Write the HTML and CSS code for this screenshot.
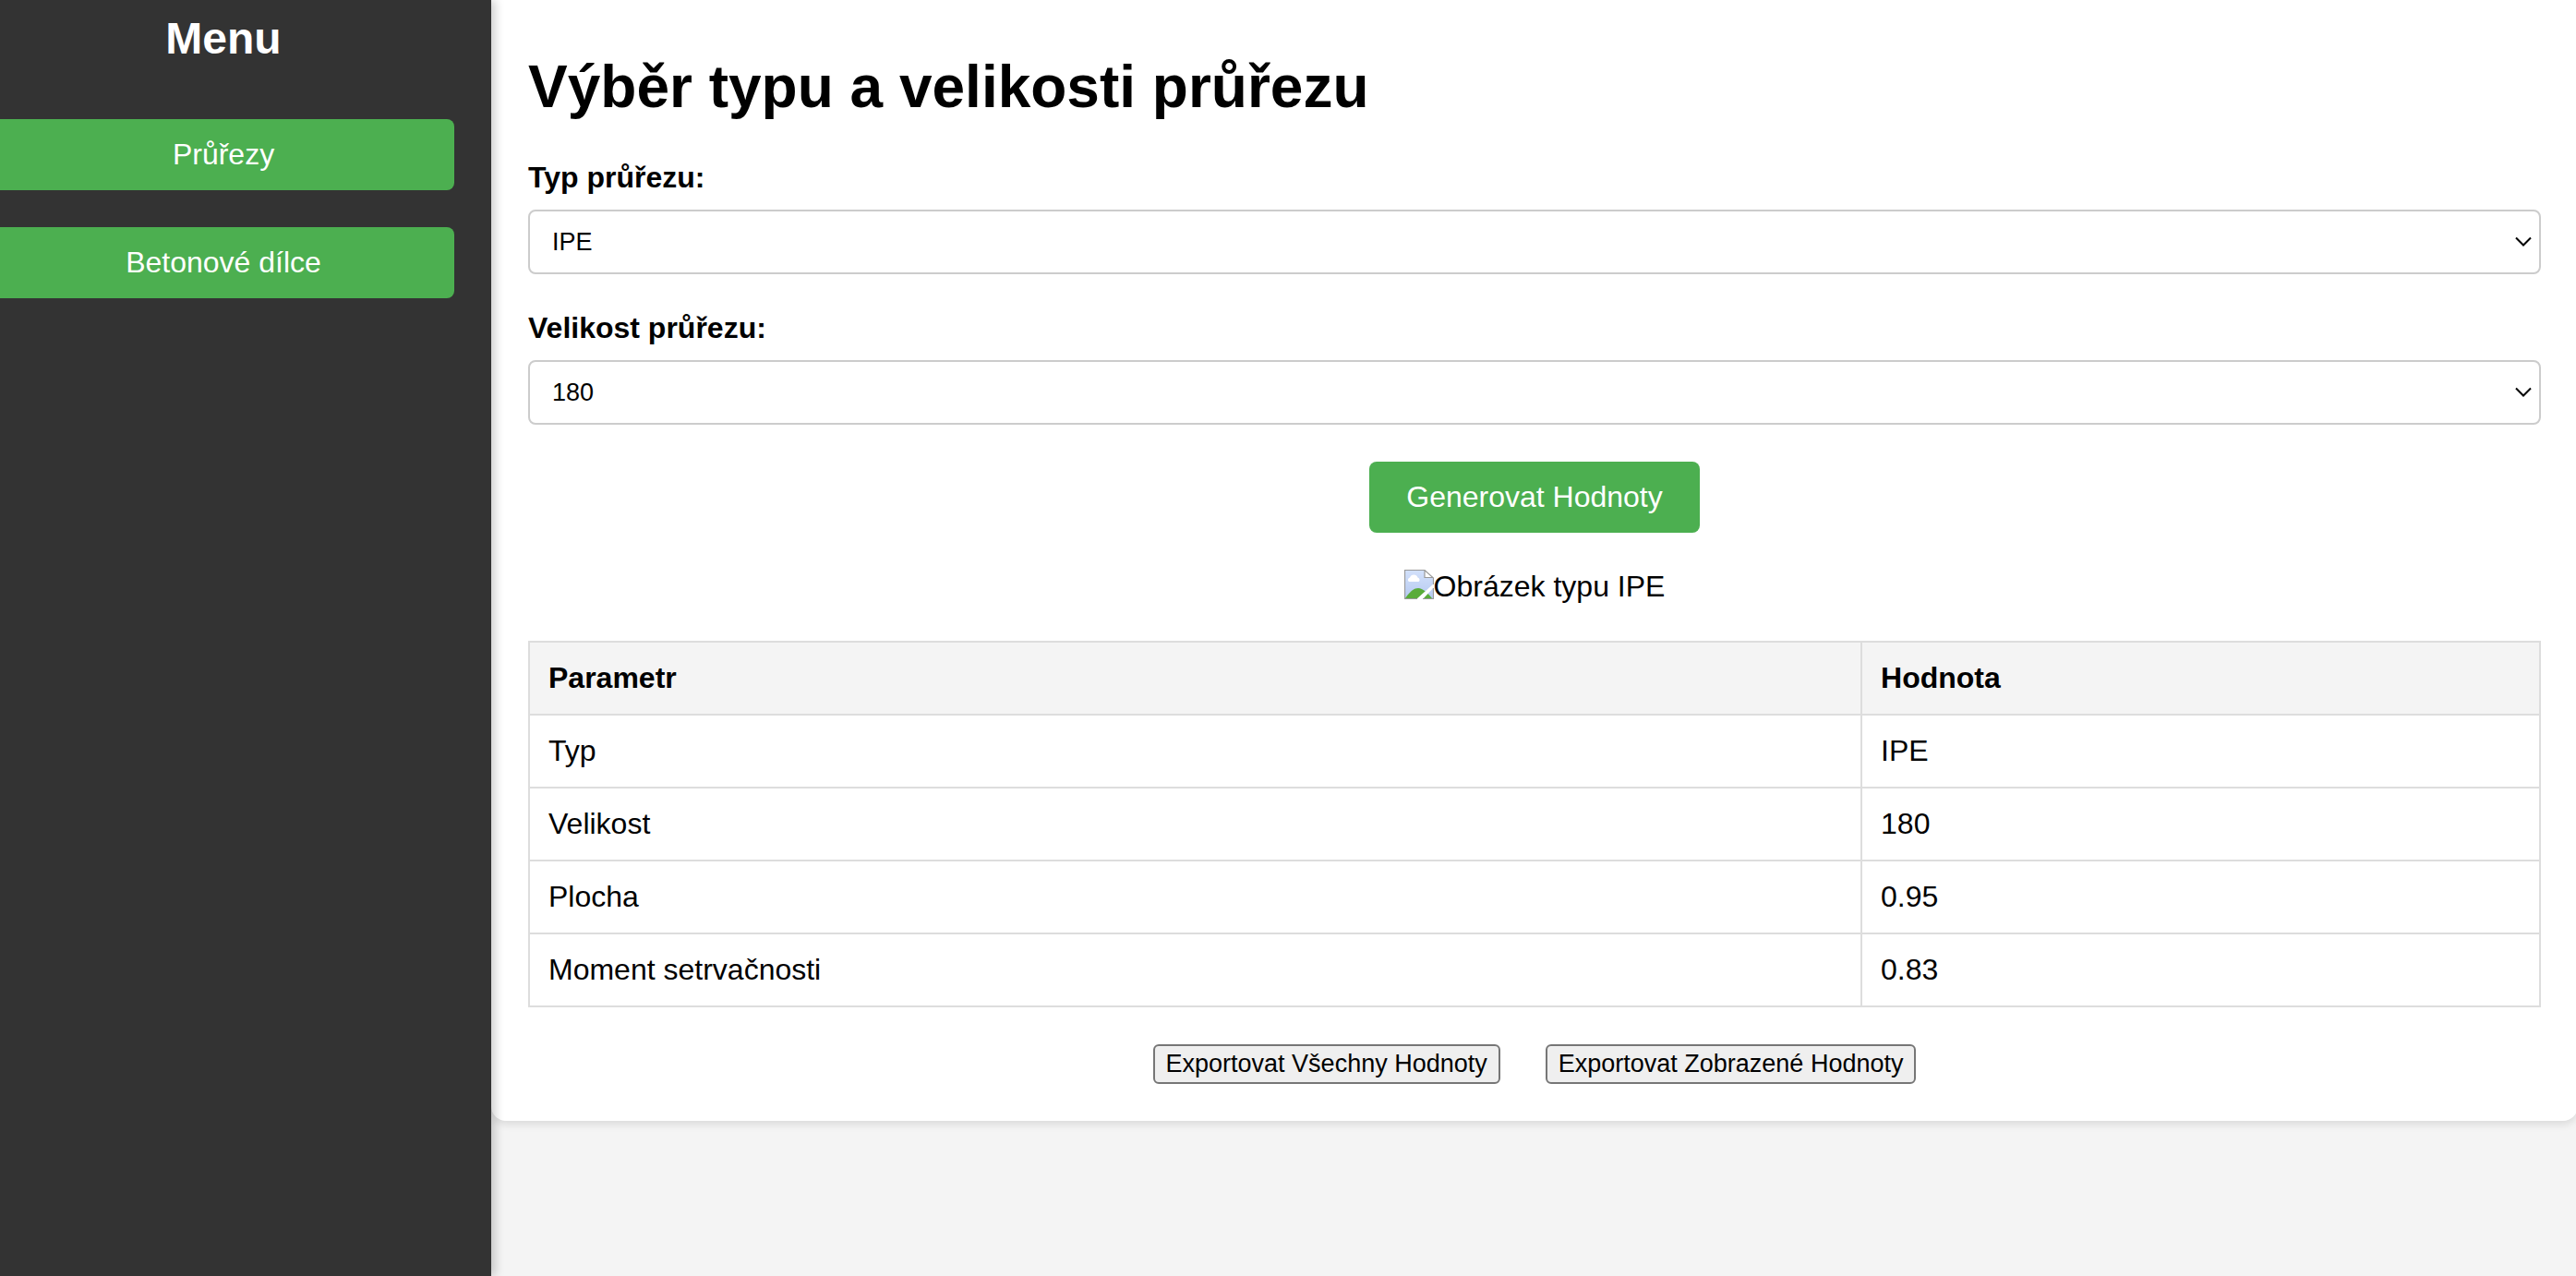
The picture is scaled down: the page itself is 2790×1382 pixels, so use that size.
FILE: index.html
```html
<!DOCTYPE html>
<html lang="cs">
<head>
<meta charset="utf-8">
<title>Výběr typu a velikosti průřezu</title>
<link rel="stylesheet" href="styles.css">
</head>
<body>
<nav class="sidebar">
  <h2 class="sidebar-title">Menu</h2>
  <button class="button" type="button">Průřezy</button>
  <button class="button" type="button">Betonové dílce</button>
</nav>
<main class="card">
  <h1 class="title">Výběr typu a velikosti průřezu</h1>
  <div class="field">
    <label class="label" for="type">Typ průřezu:</label>
    <div class="select-box">
      <select class="select" id="type"><option>IPE</option></select>
      <svg class="chevron" viewBox="0 0 18 12" aria-hidden="true"><path d="M1 1.5 9 9.5 17 1.5"/></svg>
    </div>
  </div>
  <div class="field">
    <label class="label" for="size">Velikost průřezu:</label>
    <div class="select-box">
      <select class="select" id="size"><option>180</option></select>
      <svg class="chevron" viewBox="0 0 18 12" aria-hidden="true"><path d="M1 1.5 9 9.5 17 1.5"/></svg>
    </div>
  </div>
  <button class="button button-generate" type="button">Generovat Hodnoty</button>
  <div class="picture">
    <svg class="picture-icon" viewBox="0 0 32 32" aria-hidden="true">
      <defs><linearGradient id="sky" x1="0" y1="0" x2="0" y2="1"><stop offset="0" stop-color="#d3e1fb"/><stop offset="1" stop-color="#b5c9f0"/></linearGradient></defs>
      <path d="M.5.5H22L31.500 9V31.500H.5Z" fill="url(#sky)"/>
      <path d="M5 13a2.500 2.500 0 0 1 1-4.500 4.500 4.500 0 0 1 8.500 0 2.500 2.500 0 0 1 1 4.500Z" fill="#fff"/>
      <path d="M1 31C5 25 10 20 15 20S25 25 30 31Z" fill="#5aac3a"/>
      <path d="M32 15V19L20 32H13Z" fill="#fff"/>
      <path d="M22 .5V8.500H31.500Z" fill="#fff"/>
      <path d="M32 31.500H20M14 31.500H.5V.5H22L31.500 9V16M31.500 20V32M22 .5V8.500H31.500" fill="none" stroke="#999" stroke-width="1.200"/>
    </svg>
    <span>Obrázek typu IPE</span>
  </div>
  <table class="values">
    <thead><tr><th>Parametr</th><th>Hodnota</th></tr></thead>
    <tbody>
      <tr><td>Typ</td><td>IPE</td></tr>
      <tr><td>Velikost</td><td>180</td></tr>
      <tr><td>Plocha</td><td>0.95</td></tr>
      <tr><td>Moment setrvačnosti</td><td>0.83</td></tr>
    </tbody>
  </table>
  <div class="exports">
    <button class="export" type="button">Exportovat Všechny Hodnoty</button>
    <button class="export" type="button">Exportovat Zobrazené Hodnoty</button>
  </div>
</main>
</body>
</html>
```
FILE: styles.css
```css
* { box-sizing: border-box; }

body {
  margin: 0;
  min-height: 100vh;
  display: flex;
  align-items: flex-start;
  overflow-x: hidden;
  background: #f4f4f4;
  color: #000;
  font: 32px/37px "Liberation Sans", Arial, sans-serif;
}

/* The menu runs slightly past the left edge of the window */
.sidebar {
  flex: 0 0 540px;
  align-self: stretch;
  display: flex;
  flex-direction: column;
  gap: 40px;
  margin-left: -8px;
  padding: 14px 40px 40px 0;
  background: #333;
  box-shadow: 4px 0 10px rgba(0, 0, 0, 0.2);
  position: relative;
  z-index: 1;
}

.sidebar-title {
  margin: 0 0 20px;
  color: #fff;
  font-size: 48px;
  line-height: 55px;
  text-align: center;
}

.button {
  padding: 20px 40px;
  border: 0;
  border-radius: 8px;
  background: #4caf50;
  color: #fff;
  font: inherit;
  cursor: pointer;
}

.card {
  flex: 1;
  display: flex;
  flex-direction: column;
  margin-right: -2px;
  padding: 58px 40px 40px;
  border-radius: 0 0 16px 16px;
  background: #fff;
  box-shadow: 0 4px 8px rgba(0, 0, 0, 0.1);
}

.title {
  margin: 0 0 43px;
  font-size: 64px;
  line-height: 73px;
}

.field { margin-bottom: 40px; }

.label {
  display: block;
  margin-bottom: 16px;
  font-weight: bold;
}

.select-box { position: relative; }

.select {
  display: block;
  width: 100%;
  height: 70px;
  padding: 0 48px 0 24px;
  border: 2px solid #ccc;
  border-radius: 8px;
  appearance: none;
  background: #fff;
  color: #000;
  font: 27px/30px "Liberation Sans", Arial, sans-serif;
}

.chevron {
  position: absolute;
  top: 29px;
  right: 10px;
  width: 18px;
  height: 12px;
  fill: none;
  stroke: #000;
  stroke-width: 2;
  pointer-events: none;
}

.button-generate { align-self: center; }

.picture {
  display: flex;
  justify-content: center;
  margin: 40px 0;
}

.picture-icon {
  width: 32px;
  height: 32px;
}

.values {
  width: 100%;
  border-collapse: collapse;
}

.values th,
.values td {
  padding: 20px;
  border: 2px solid #ddd;
  text-align: left;
}

.values th { background: #f4f4f4; }

.exports {
  display: flex;
  justify-content: center;
  gap: 49px;
  margin-top: 40px;
}

.export {
  padding: 4px 12px;
  border: 2px solid #767676;
  border-radius: 6px;
  background: #efefef;
  color: #000;
  font: 27px/31px "Liberation Sans", Arial, sans-serif;
}
```
